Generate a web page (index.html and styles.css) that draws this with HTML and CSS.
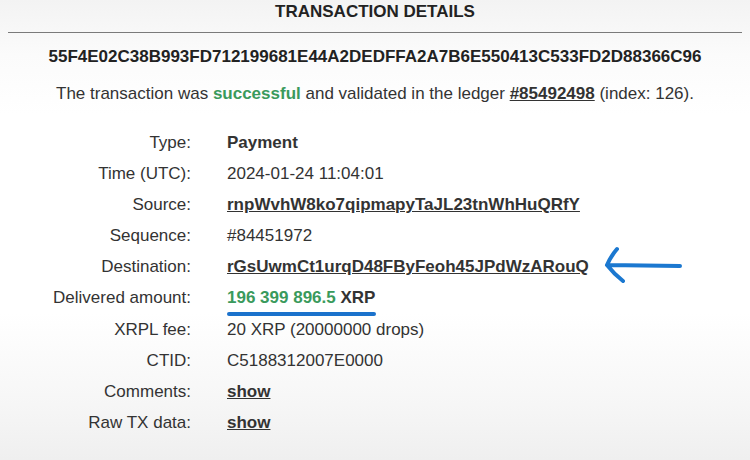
FILE: index.html
```html
<!DOCTYPE html>
<html>
<head>
<meta charset="utf-8">
<link rel="stylesheet" href="styles.css">
</head>
<body>
<div class="page">
  <h1 class="title">TRANSACTION DETAILS</h1>
  <hr class="rule">
  <div class="hash">55F4E02C38B993FD712199681E44A2DEDFFA2A7B6E550413C533FD2D88366C96</div>
  <p class="status">The transaction was <span class="ok">successful</span> and validated in the ledger <a class="link" href="#">#85492498</a> (index: 126).</p>
  <div class="details">
    <div class="label">Type:</div><div class="value strong">Payment</div>
    <div class="label">Time (UTC):</div><div class="value">2024-01-24 11:04:01</div>
    <div class="label">Source:</div><div class="value"><a class="link" href="#">rnpWvhW8ko7qipmapyTaJL23tnWhHuQRfY</a></div>
    <div class="label">Sequence:</div><div class="value">#84451972</div>
    <div class="label">Destination:</div>
    <div class="value dest"><a class="link" href="#">rGsUwmCt1urqD48FByFeoh45JPdWzARouQ</a>
      <svg class="arrow" width="90" height="44" viewBox="0 0 90 44"><path d="M14 21 L87 22 M14 21 Q18 12 24 5 M14 21 Q21 30 30 37" fill="none" stroke="#1b78d0" stroke-width="4" stroke-linecap="round" stroke-linejoin="round"/></svg>
    </div>
    <div class="label">Delivered amount:</div><div class="value"><span class="amount"><span class="ok strong">196 399 896.5</span> <span class="strong">XRP</span></span></div>
    <div class="label">XRPL fee:</div><div class="value">20 XRP (20000000 drops)</div>
    <div class="label">CTID:</div><div class="value">C5188312007E0000</div>
    <div class="label">Comments:</div><div class="value"><a class="link" href="#">show</a></div>
    <div class="label">Raw TX data:</div><div class="value"><a class="link" href="#">show</a></div>
  </div>
</div>
</body>
</html>
```

FILE: styles.css
```css
html, body {
  margin: 0;
  padding: 0;
}
body {
  width: 750px;
  height: 460px;
  overflow: hidden;
  background: linear-gradient(to bottom, #f3f3f3 0%, #fbfbfb 12%, #ffffff 25%, #ffffff 68%, #f6f6f6 88%, #efefef 100%);
  font-family: "Liberation Sans", Arial, sans-serif;
  color: #333;
}
.page {
  padding: 0 8px;
}
.title {
  margin: 0;
  padding-top: 2px;
  text-align: center;
  font-size: 17px;
  font-weight: bold;
  color: #222;
  line-height: 20px;
}
.rule {
  border: 0;
  border-top: 1px solid #7a7a7a;
  margin: 10px 0 0 0;
  height: 0;
}
.hash {
  margin-top: 14px;
  text-align: center;
  font-size: 17px;
  font-weight: bold;
  color: #222;
  line-height: 20px;
}
.status {
  margin: 17px 0 0 0;
  text-align: center;
  font-size: 17px;
  line-height: 20px;
  color: #333;
}
.ok {
  color: #3a9a5c;
  font-weight: bold;
}
.strong {
  font-weight: bold;
}
.link {
  color: #333;
  font-weight: bold;
  text-decoration: underline;
}
.details {
  margin-top: 29px;
  display: grid;
  grid-template-columns: 183px auto;
  column-gap: 36px;
  row-gap: 11.1px;
  font-size: 17px;
  line-height: 20px;
}
.label {
  text-align: right;
  color: #333;
}
.value {
  color: #333;
}
.dest {
  position: relative;
}
.arrow {
  position: absolute;
  left: 366px;
  top: -13px;
}
.amount {
  display: inline-block;
  position: relative;
}
.amount::after {
  content: "";
  position: absolute;
  left: 0;
  right: -1px;
  top: 24px;
  height: 4px;
  border-radius: 2px;
  background: #1b72cc;
}
```
